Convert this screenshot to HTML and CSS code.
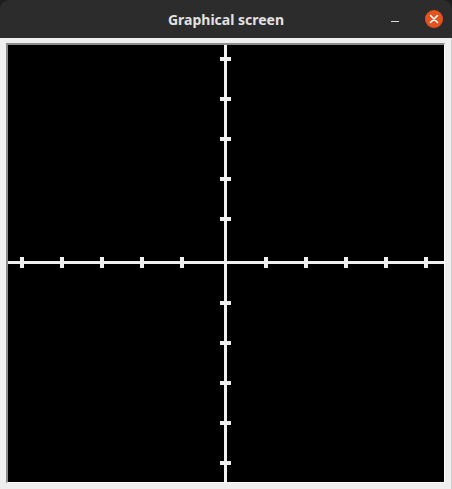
FILE: index.html
```html
<!DOCTYPE html>
<html>
<head>
<meta charset="utf-8">
<title>Graphical screen</title>
<link rel="stylesheet" href="styles.css">
</head>
<body>
<div class="window">
  <header class="titlebar">
    <span class="title">Graphical screen</span>
    <div class="controls">
      <span class="minimize"></span>
      <span class="close">
        <svg width="18" height="18" viewBox="0 0 18 18"><path d="M5.5 5.5 L12.5 12.5 M12.5 5.5 L5.5 12.5" stroke="#fff" stroke-width="1.6" stroke-linecap="round"/></svg>
      </span>
    </div>
  </header>
  <main class="content">
    <div class="frame">
      <svg class="canvas" width="436" height="437" viewBox="0 0 436 437">
        <rect width="436" height="437" fill="#000"/>
        <g fill="#f0f0f0">
          <rect x="0" y="216" width="436" height="3"/>
          <rect x="216" y="0" width="3" height="437"/>
          <rect x="12" y="212" width="4" height="11"/>
          <rect x="52" y="212" width="4" height="11"/>
          <rect x="92" y="212" width="4" height="11"/>
          <rect x="132" y="212" width="4" height="11"/>
          <rect x="172" y="212" width="4" height="11"/>
          <rect x="256" y="212" width="4" height="11"/>
          <rect x="296" y="212" width="4" height="11"/>
          <rect x="336" y="212" width="4" height="11"/>
          <rect x="376" y="212" width="4" height="11"/>
          <rect x="416" y="212" width="4" height="11"/>
          <rect x="212" y="12" width="11" height="4"/>
          <rect x="212" y="52" width="11" height="4"/>
          <rect x="212" y="92" width="11" height="4"/>
          <rect x="212" y="132" width="11" height="4"/>
          <rect x="212" y="172" width="11" height="4"/>
          <rect x="212" y="256" width="11" height="4"/>
          <rect x="212" y="296" width="11" height="4"/>
          <rect x="212" y="336" width="11" height="4"/>
          <rect x="212" y="376" width="11" height="4"/>
          <rect x="212" y="416" width="11" height="4"/>
        </g>
      </svg>
    </div>
  </main>
</div>
</body>
</html>
```

FILE: styles.css
```css
html, body {
  margin: 0;
  padding: 0;
  background: #1e1e1e;
}
.window {
  width: 452px;
  height: 489px;
  display: flex;
  flex-direction: column;
}
.titlebar {
  height: 38px;
  background: #2c2c2c;
  border-radius: 9px 9px 0 0;
  position: relative;
  display: flex;
  align-items: center;
  justify-content: center;
}
.title {
  font-family: "Noto Sans", "DejaVu Sans", sans-serif;
  font-weight: bold;
  font-size: 14px;
  color: #e2e2e2;
  margin-top: 1px;
}
.controls {
  position: absolute;
  right: 9px;
  top: 10px;
  display: flex;
  align-items: center;
  gap: 26px;
}
.minimize {
  width: 8px;
  height: 1px;
  background: #dcdcdc;
  margin-top: 4px;
}
.close {
  width: 18px;
  height: 18px;
  border-radius: 50%;
  background: #e2531f;
  display: flex;
}
.content {
  flex: 1;
  background: #efefef;
  padding: 5px 6px 6px 6px;
  border-right: 1px solid #d2d2d2;
}
.frame {
  border-top: 2px solid #8c8c8c;
  border-left: 2px solid #8c8c8c;
  border-right: 1px solid #ffffff;
  border-bottom: 1px solid #ffffff;
  width: 436px;
  height: 437px;
}
.canvas {
  display: block;
}
```
